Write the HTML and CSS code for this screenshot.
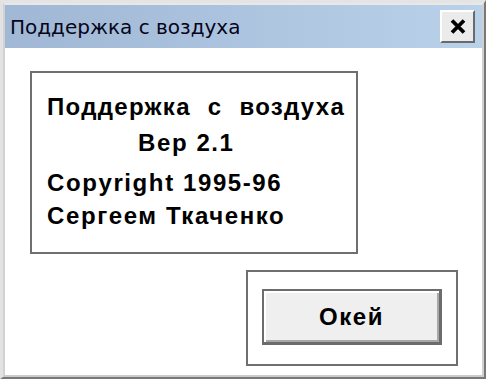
FILE: index.html
```html
<!DOCTYPE html>
<html lang="ru">
<head>
<meta charset="utf-8">
<title>Поддержка с воздуха</title>
<link rel="stylesheet" href="styles.css">
</head>
<body>
<div class="window">
  <div class="frame">
    <div class="titlebar">
      <span class="title">Поддержка с воздуха</span>
      <button class="close" aria-label="Закрыть">
        <svg width="16" height="15" viewBox="0 0 16 15"><path d="M2 1.5 L14 13.5 M14 1.5 L2 13.5" stroke="#000" stroke-width="3.8" fill="none"/></svg>
      </button>
    </div>
    <div class="content">
      <div class="info">
        <div class="lines">
          <div class="line head">Поддержка с воздуха</div>
          <div class="line ver">Вер 2.1</div>
          <div class="line copy">Copyright 1995-96</div>
          <div class="line author">Сергеем Ткаченко</div>
        </div>
      </div>
      <div class="okframe">
        <button class="ok">Окей</button>
      </div>
    </div>
  </div>
</div>
</body>
</html>
```
FILE: styles.css
```css
html, body {
  margin: 0;
  padding: 0;
  background: #ffffff;
}

.window {
  width: 486px;
  height: 379px;
  box-sizing: border-box;
  border-top: 3px solid #e4e4e4;
  border-left: 3px solid #e2e2e2;
  border-right: 2px solid #787878;
  border-bottom: 2px solid #787878;
}

.frame {
  height: 100%;
  box-sizing: border-box;
  border-top: 2px solid #e8e8e8;
  border-left: 2px solid #d2d2d2;
  border-right: 2px solid #d0d0d0;
  border-bottom: 2px solid #cbcbcb;
  display: flex;
  flex-direction: column;
}

.titlebar {
  height: 43px;
  flex: none;
  display: flex;
  align-items: center;
  padding-left: 5px;
  padding-right: 7px;
  background: linear-gradient(to right, #a0b7d5, #bad1ea);
}

.title {
  flex: 1;
  font-family: "DejaVu Sans", sans-serif;
  font-size: 20px;
  color: #05051a;
  white-space: nowrap;
}

.close {
  width: 35px;
  height: 33px;
  margin: 0;
  padding: 0;
  box-sizing: border-box;
  border: 2px solid;
  border-color: #ffffff #6a6a6a #6a6a6a #ffffff;
  background: #ebebeb;
  display: flex;
  align-items: center;
  justify-content: center;
}

.close svg {
  display: block;
}

.content {
  flex: 1;
  background: #ffffff;
  display: flex;
  flex-direction: column;
  padding: 23px 24px 9px 25px;
  gap: 16px;
}

.info {
  width: 328px;
  height: 183px;
  box-sizing: border-box;
  border: 2px solid #6f6f6f;
  padding: 16px 0 0 15px;
  overflow: hidden;
  font-family: "Liberation Sans", Arial, sans-serif;
  font-weight: bold;
  font-size: 24px;
  letter-spacing: 1.6px;
  color: #000;
}

.lines {
  width: 305px;
  overflow: hidden;
}

.line {
  line-height: 36px;
  white-space: nowrap;
}

.head {
  letter-spacing: 1.3px;
  word-spacing: 9px;
}

.ver {
  padding-left: 91px;
}

.copy {
  margin-top: 4px;
}

.author {
  margin-top: -3px;
}

.okframe {
  align-self: flex-end;
  width: 212px;
  height: 96px;
  box-sizing: border-box;
  border: 2px solid #6f6f6f;
  padding: 17px 0 0 14px;
}

.ok {
  width: 180px;
  height: 56px;
  margin: 0;
  padding: 0;
  box-sizing: border-box;
  border: 2px solid #6c6c6c;
  border-right-width: 3px;
  border-bottom-width: 3px;
  box-shadow: inset 2px 2px 0 #ffffff, inset -2px -2px 0 #a8a8a8;
  background: #efefef;
  font-family: "Liberation Sans", Arial, sans-serif;
  font-weight: bold;
  font-size: 24px;
  letter-spacing: 1.6px;
  color: #000;
}
```
